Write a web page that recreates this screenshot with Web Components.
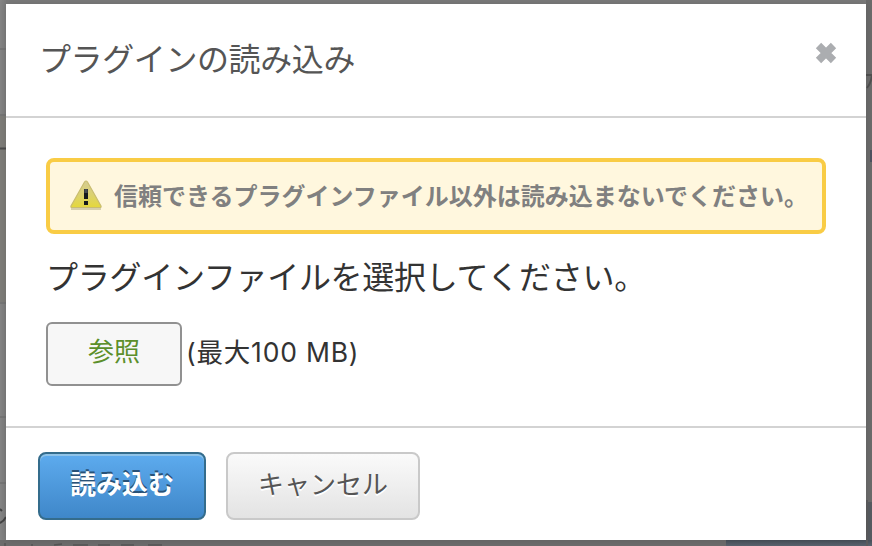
<!DOCTYPE html>
<html lang="ja"><head><meta charset="utf-8"><title>プラグインの読み込み</title>
<style>
html,body{margin:0;width:872px;height:546px;overflow:hidden;font-family:"Liberation Sans","Noto Sans CJK JP",sans-serif}
</style></head><body>
<page-backdrop>
 <plugin-dialog>
  <dialog-header slot="header">プラグインの読み込み</dialog-header>
  <warning-banner>信頼できるプラグインファイル以外は読み込まないでください。</warning-banner>
  <file-picker><span slot="prompt">プラグインファイルを選択してください。</span><span slot="browse">参照</span><span slot="limit">(最大100 MB)</span></file-picker>
  <push-button slot="footer" primary>読み込む</push-button>
  <push-button slot="footer">キャンセル</push-button>
 </plugin-dialog>
</page-backdrop>
<script>
function define(name, html){
  customElements.define(name, class extends HTMLElement{
    constructor(){ super(); this.attachShadow({mode:'open'}).innerHTML = html; }
  });
}
define('page-backdrop', `<style>
:host{display:block;box-sizing:border-box;position:relative;width:872px;height:546px;padding:4px 6px 6px;background:#747472;overflow:hidden}
.bg{position:absolute;left:0;top:0}
::slotted(*){position:relative}
</style>
<svg class="bg" width="872" height="546" viewBox="0 0 872 546">
<defs><linearGradient id="l"><stop offset="0" stop-color="#858585"/><stop offset="1" stop-color="#7c7c7c"/></linearGradient>
<linearGradient id="b" x2="0" y2="1"><stop offset="0" stop-color="#48505a"/><stop offset="1" stop-color="#59636e"/></linearGradient></defs>
<rect width="872" height="4" fill="#7a7a7a"/>
<rect width="6" height="546" fill="url(#l)"/><rect y="116" width="6" height="186" fill="#7d7c78"/>
<path d="M0 49h6M0 115h6M0 303h6M0 417h6M0 483h6" stroke="#757575" stroke-width="2"/>
<path d="M0 148.500h6" stroke="#4c4c4c" stroke-width="2"/>
<rect x="866" width="6" height="546" fill="#6b6b6b"/>
<path d="M866 75h6q-1 8-5 13" fill="none" stroke="#505050" stroke-width="2"/>
<rect x="870" y="150" width="2" height="12" fill="#4e5260"/>
<rect y="540" width="726" height="6" fill="#6c6c6c"/><rect x="726" y="540" width="146" height="6" fill="url(#b)"/>
<rect x="866" y="500" width="2" height="46" fill="#5c5c5e"/><path d="M868 502h4v38h-4z" fill="#575b61"/>
<path d="M0 509l2 2M0 523q4-2 6-6" fill="none" stroke="#444" stroke-width="2"/>
<path d="M5 543v3M32 544v2M54 545l8-1M73 545h15M98 545h12M121 545h13M148 545h14" stroke="#555" stroke-width="1.500"/>
</svg><slot></slot>`);
define('plugin-dialog', `<style>
:host{display:grid;grid-template-rows:114px 308px 114px;box-sizing:border-box;width:860px;height:536px;background:#fff;box-shadow:0 0 8px rgba(0,0,0,.12)}
header,footer{box-sizing:border-box}
header{border-bottom:2px solid #d3d3d3}
main{padding:40px;box-sizing:border-box}
footer{border-top:2px solid #d3d3d3;display:flex;gap:20px;padding:24px 32px;align-items:flex-start}
</style><header><slot name="header"></slot></header><main><slot></slot></main><footer><slot name="footer"></slot></footer>`);
define('dialog-header', `<style>
:host{display:flex;justify-content:space-between;padding:33px 28px 0 33px;color:#555;font-size:32px;line-height:46px;letter-spacing:-.4px}
svg{margin-top:4px}
</style><span><slot></slot></span>
<svg width="24" height="24" viewBox="0 0 24 24"><path d="M4.500 4.500L19.500 19.500M19.500 4.500L4.500 19.500" stroke="#abadb0" stroke-width="7.500"/></svg>`);
define('warning-banner', `<style>
:host{display:flex;align-items:center;box-sizing:border-box;width:780px;height:76px;border:4px solid #f9cc45;border-radius:8px;background:#fff7de;padding:0 0 0 20px;color:#808080;font-size:24px;font-weight:700;line-height:36px;white-space:nowrap}
svg{flex:none;margin-right:12px}
span{padding-top:2px}
</style><svg width="32" height="32" viewBox="0 0 32 32">
<defs><linearGradient id="t" x2="0" y2="1"><stop offset="0" stop-color="#d5cc91"/><stop offset=".5" stop-color="#dbd171"/><stop offset="1" stop-color="#e5d83b"/></linearGradient></defs>
<path d="M1 29h30" stroke="#d7cfac" stroke-width="2"/>
<path d="M14.500 2q1.500-2 3 0L31 26q.5 1.500-1 1.500H2Q.5 27.500 1 26z" fill="url(#t)" stroke="#c9bd70" stroke-width="1.200"/>
<path d="M14 9h4v10h-4zM14 21h4v4h-4z" fill="#15191c"/><path d="M14.300 9h3.400v4h-3.400z" fill="#444a4f"/></svg><span><slot></slot></span>`);
define('file-picker', `<style>
:host{display:block;color:#333}
.prompt{font-size:32px;line-height:46px;letter-spacing:-.27px;padding-top:21px;height:47px;white-space:nowrap;box-sizing:content-box}
.row{display:flex;align-items:flex-start;gap:4px;margin-top:20px;font-size:26px;line-height:38px}
button{font:inherit;box-sizing:border-box;width:136px;height:64px;background:#f7f7f7;border:2px solid #919191;border-radius:6px;color:#5c8f2b;padding:0 0 4px}
.limit{padding-top:11px;letter-spacing:.8px;font-family:Inter,"Noto Sans CJK JP",sans-serif;font-size:26.500px;white-space:nowrap}
</style><div class="prompt"><slot name="prompt"></slot></div><div class="row"><button><slot name="browse"></slot></button><span class="limit"><slot name="limit"></slot></span></div>`);
define('push-button', `<style>
:host{display:block}
button{display:block;font:26px/38px "Noto Sans CJK JP",sans-serif;box-sizing:border-box;width:194px;height:68px;border:2px solid #c9c9c9;border-radius:8px;background:linear-gradient(#fafafa,#e3e3e3);color:#555;text-shadow:0 2px 0 #fff;padding:0 0 7px}
:host([primary]) button{width:168px;font-weight:700;color:#fff;border-color:#346c8c;background:linear-gradient(#5dabee,#3f87c9);box-shadow:inset 0 2px 0 #8fc3e8;text-shadow:0 -2px 0 #285278}
</style><button><slot></slot></button>`);
</script></body></html>
